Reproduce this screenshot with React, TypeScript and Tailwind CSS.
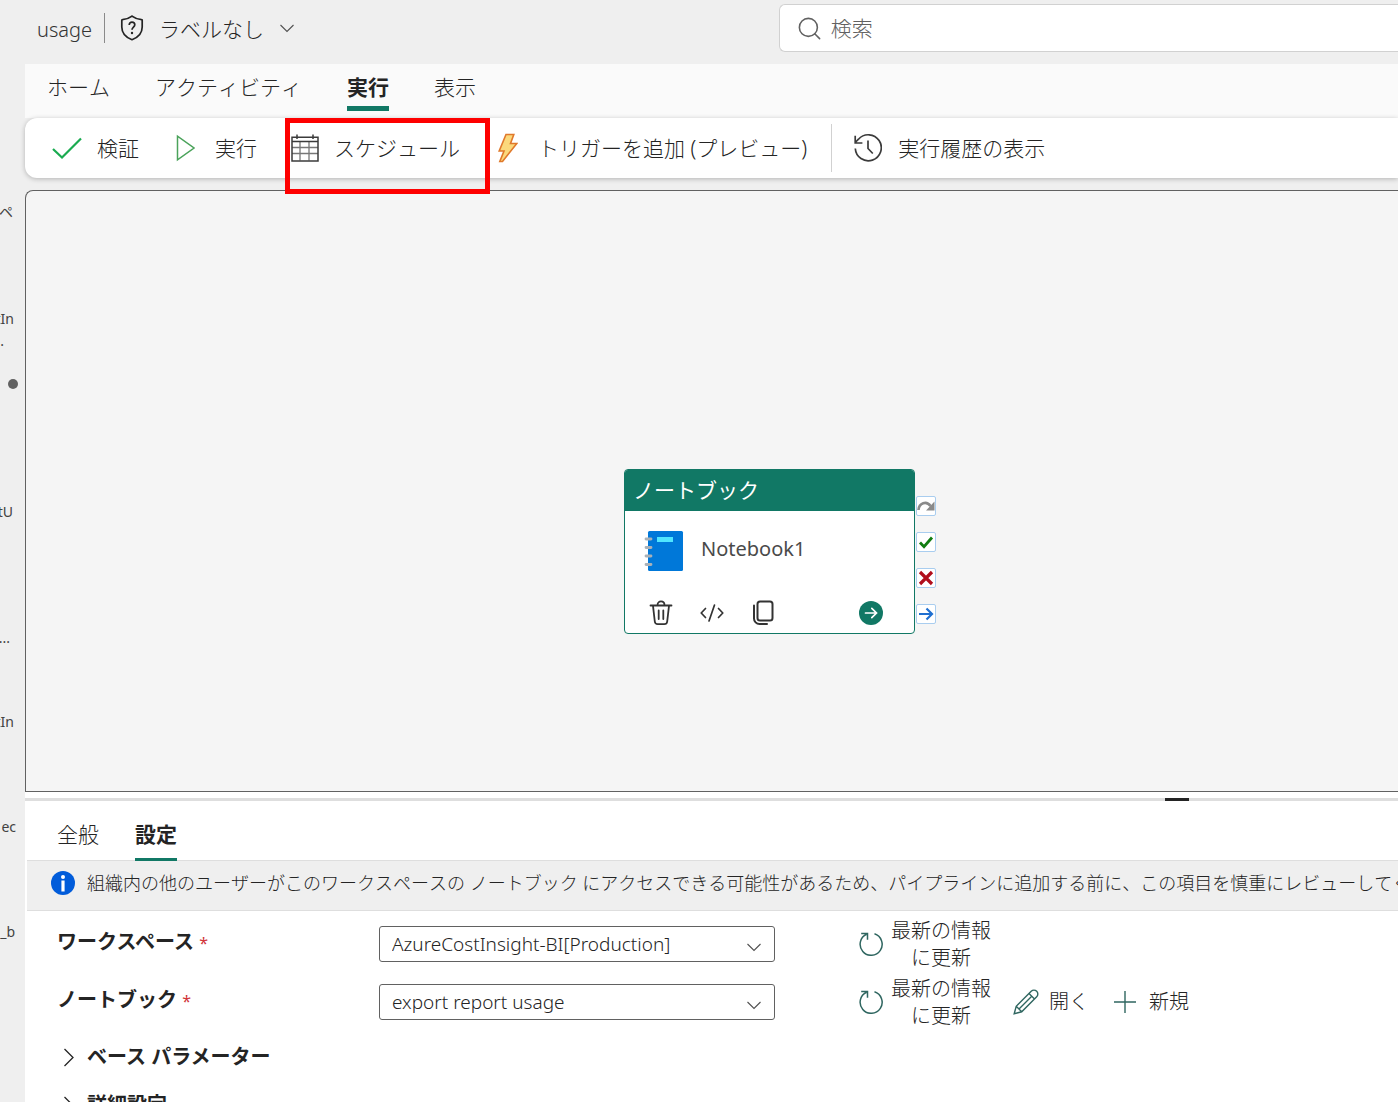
import type { ReactNode } from "react";
import { Search } from "lucide-react";

const RIBBON_TABS = ["ホーム", "アクティビティ", "実行", "表示"];
const PANEL_TABS = ["全般", "設定"];

function ChevronDown({ className = "" }: { className?: string }) {
  return (
    <svg width="16" height="10" viewBox="0 0 16 10" fill="none" stroke="#505050" strokeWidth="1.1" className={className} aria-hidden="true">
      <path d="M1.500 2L8 8.500 14.500 2" />
    </svg>
  );
}

function ChevronRight() {
  return (
    <svg width="12" height="20" viewBox="0 0 12 20" fill="none" stroke="#242424" strokeWidth="1.3" aria-hidden="true">
      <path d="M1.500 2L10 10.500 1.500 19" />
    </svg>
  );
}

function ShieldIcon() {
  return (
    <svg width="24" height="26" viewBox="0 0 24 26" fill="none" stroke="#242424" strokeWidth="1.7" aria-hidden="true">
      <path d="M12 1.2c2.8 2.2 6 3.2 9.6 3.5a.6.6 0 0 1 .6.6V12c0 6-3.700 10.300-10.200 12.700C5.500 22.300 1.800 18 1.800 12V5.300a.6.6 0 0 1 .6-.6C6 4.400 9.200 3.400 12 1.200Z" />
      <path d="M9.200 9.900c0-1.700 1.200-2.800 2.800-2.800s2.800 1.100 2.800 2.700c0 2.200-2.800 2.500-2.800 5" />
      <circle cx="12" cy="18" r="1.200" fill="#242424" stroke="none" />
    </svg>
  );
}

function CheckIcon() {
  return (
    <svg width="30" height="28" viewBox="0 0 30 28" fill="none" stroke="#1aab50" strokeWidth="2.200" aria-hidden="true">
      <path d="M1 15l9 8.500L29 4.500" />
    </svg>
  );
}

function PlayIcon() {
  return (
    <svg width="20" height="28" viewBox="0 0 20 28" fill="none" stroke="#4ba35b" strokeWidth="1.500" aria-hidden="true">
      <path d="M2.500 2.200v23.600L19 14Z" />
    </svg>
  );
}

function CalendarIcon() {
  return (
    <svg width="28" height="28" viewBox="0 0 28 28" fill="none" aria-hidden="true">
      <path d="M1 13.500h26M1 19.500h26M9 7.500v19M18 7.500v19" stroke="#777" strokeWidth="1.300" />
      <path d="M1 3.200h26v23.800H1ZM1 7.500h26M6 .5v4.500M22 .5v4.500" stroke="#3b3b3b" strokeWidth="1.500" />
    </svg>
  );
}

function BoltIcon() {
  return (
    <svg width="20" height="30" viewBox="0 0 20 30" aria-hidden="true">
      <path d="M8 1.500h7.800L12.500 10.500h6.300L4.500 28.500H1.800L6 18H1.200Z" fill="#fbd97c" stroke="#e0792b" strokeWidth="1.600" />
    </svg>
  );
}

function HistoryIcon() {
  return (
    <svg width="28" height="30" viewBox="0 0 28 30" fill="none" stroke="#3b3b3b" strokeWidth="1.700" aria-hidden="true">
      <path d="M1.300 15.500A13 13 0 1 0 4.500 6.200L1.200 9.500M1.200 2.800v7.200h7.200M14 7.500v8l4.800 5" />
    </svg>
  );
}

function RefreshIcon() {
  return (
    <svg width="24" height="24" viewBox="0 0 24 24" fill="none" stroke="#2f6660" strokeWidth="1.500" aria-hidden="true">
      <path d="M15.500 1.800A11 11 0 1 1 7.500 2.300M2.200 1.500h6.300v6.300" />
    </svg>
  );
}

function PencilIcon() {
  return (
    <svg width="26" height="26" viewBox="0 0 26 26" fill="none" stroke="#2f6660" strokeWidth="1.400" aria-hidden="true">
      <path d="M1.200 24.800l2-7.500L18.200 2.300a3.700 3.700 0 0 1 5.500 5.500L8.700 22.800ZM16 4.500l5.500 5.500M19 7L6 20M3.200 17.300l5.500 5.500" />
    </svg>
  );
}

function PlusIcon() {
  return (
    <svg width="24" height="24" viewBox="0 0 24 24" stroke="#2f6660" strokeWidth="1.400" aria-hidden="true">
      <path d="M12 1v22M1 12h22" />
    </svg>
  );
}

function NotebookIcon() {
  return (
    <svg width="40" height="42" viewBox="0 0 40 42" aria-hidden="true">
      <rect x="4" y="1" width="35" height="40" rx="1.500" fill="#0078d9" />
      <rect x="13" y="7" width="16" height="5" fill="#50e6ff" />
      <path d="M2 9h5M2 17.500h5M2 26h5M2 34.500h5" stroke="#a9b1b8" strokeWidth="2.800" strokeLinecap="round" />
    </svg>
  );
}

function TrashIcon() {
  return (
    <svg width="24" height="26" viewBox="0 0 24 26" fill="none" stroke="#333" strokeWidth="1.800" strokeLinecap="round" aria-hidden="true">
      <path d="M1.500 5.500h21M8.500 5.200c0-5 7-5 7 0M4 5.800l1.800 15.700a3 3 0 0 0 3 2.700h6.400a3 3 0 0 0 3-2.700L20 5.800M9.700 10.500v8.500M14.300 10.500v8.500" />
    </svg>
  );
}

function CodeIcon() {
  return (
    <svg width="24" height="20" viewBox="0 0 24 20" fill="none" stroke="#333" strokeWidth="1.700" strokeLinecap="round" strokeLinejoin="round" aria-hidden="true">
      <path d="M5.500 5.500L1.200 10l4.300 4.500M18.500 5.500l4.300 4.500-4.300 4.500M14.500 2l-5.500 16" />
    </svg>
  );
}

function CopyIcon() {
  return (
    <svg width="22" height="26" viewBox="0 0 22 26" fill="none" stroke="#333" strokeWidth="2" strokeLinecap="round" aria-hidden="true">
      <rect x="5.500" y="1.500" width="15" height="19" rx="2.500" />
      <path d="M2 5.500v13a5.500 5.500 0 0 0 5.500 5.500H15" />
    </svg>
  );
}

function ToolbarButton({ icon, label, className = "", children }: { icon: ReactNode; label: string; className?: string; children?: ReactNode }) {
  return (
    <button className={`relative flex h-full shrink-0 items-center whitespace-nowrap ${className}`}>
      {icon}
      <span>{label}</span>
      {children}
    </button>
  );
}

function Header() {
  return (
    <header className="flex h-16 shrink-0 items-start">
      <div className="flex h-14 w-5/9 items-center pl-[37px]">
        <span className="pt-1 text-xl text-[#333]">usage</span>
        <span className="ml-3 h-[30px] w-px bg-[#8a8a8a]" />
        <button className="ml-[15px] flex items-center whitespace-nowrap">
          <ShieldIcon />
          <span className="mx-[15px] pt-0.5">ラベルなし</span>
          <ChevronDown />
        </button>
      </div>
      <label className="mt-1 ml-0.5 flex h-12 flex-1 items-center gap-2 rounded-l-md border border-r-0 border-[#d1d1d1] bg-white pl-4 text-[#616161]">
        <Search size={27} strokeWidth={1.4} className="shrink-0" />
        <input type="search" aria-label="検索" placeholder="検索" className="w-full bg-transparent outline-none placeholder:text-[#616161]" />
      </label>
    </header>
  );
}

function Sidebar() {
  return (
    <nav className="flex w-[25px] shrink-0 flex-col items-end overflow-hidden pt-[138px] text-sm font-normal text-[#424242]">
      <a href="#workspace" className="h-[106px] pr-3">ペ</a>
      <a href="#insight" className="h-[71px] pr-[11px] text-right leading-[22px]">
        tIn
        <br />
        <span className="pr-2.5">.</span>
      </a>
      <span className="mr-[7px] h-2.5 w-2.5 shrink-0 rounded-full bg-[#616161]" />
      <a href="#usage" className="mt-[113px] h-[126px] pr-3">tU</a>
      <a href="#more" className="h-[84px] pr-[15px]">...</a>
      <a href="#cost" className="h-[105px] pr-[11px]">tIn</a>
      <a href="#spec" className="h-[105px] pr-[9px]">ec</a>
      <a href="#bi" className="pr-2.5">_b</a>
    </nav>
  );
}

function Ribbon() {
  return (
    <div className="shrink-0 pb-3">
      <div className="bg-[#fafafa]">
        <div role="tablist" className="flex h-[54px] gap-[45px] pl-[22px]">
          {RIBBON_TABS.map((tab) => (
            <button
              key={tab}
              role="tab"
              aria-selected={tab === "実行"}
              className={`mb-[7px] border-b-[5px] pt-1 whitespace-nowrap ${
                tab === "実行" ? "border-[#117865] font-bold" : "border-transparent"
              }`}
            >
              {tab}
            </button>
          ))}
        </div>
      </div>
      <div className="flex h-[60px] items-center rounded-l-xl bg-white pl-[27px] shadow-[0_1px_5px_rgba(0,0,0,0.25)]">
        <ToolbarButton icon={<CheckIcon />} label="検証" className="gap-[15px]" />
        <ToolbarButton icon={<PlayIcon />} label="実行" className="ml-9 gap-5" />
        <ToolbarButton icon={<CalendarIcon />} label="スケジュール" className="ml-[34px] gap-[15px]">
          <span className="absolute top-0 -right-[30px] -bottom-4 -left-1.5 z-10 border-[5px] border-[#fe0000]" />
        </ToolbarButton>
        <ToolbarButton icon={<BoltIcon />} label="トリガーを追加 (プレビュー)" className="ml-[38px] gap-5" />
        <span className="ml-6 h-12 w-px shrink-0 bg-[#d1d1d1]" />
        <ToolbarButton icon={<HistoryIcon />} label="実行履歴の表示" className="ml-[22px] gap-4" />
      </div>
    </div>
  );
}

function Port({ label, children }: { label: string; children: ReactNode }) {
  return (
    <button aria-label={label} className="h-5 w-5 rounded-xs border border-[#a9cdef] bg-white">
      <svg viewBox="0 0 18 18" fill="none" aria-hidden="true">
        {children}
      </svg>
    </button>
  );
}

function NotebookNode() {
  return (
    <div className="absolute top-[278px] left-[598px] flex items-start">
      <div className="w-[291px] overflow-hidden rounded border border-[#117865] bg-white">
        <div className="flex h-[41px] items-center bg-[#117865] pb-0.5 pl-2 font-normal text-white">ノートブック</div>
        <div className="flex h-20 items-center gap-[17px] pl-[19px] text-xl font-normal text-[#4a4a4a]">
          <NotebookIcon />
          <span className="pb-1">Notebook1</span>
        </div>
        <div className="flex h-[42px] items-center pt-0.5 pr-[31px] pl-6">
          <button aria-label="削除"><TrashIcon /></button>
          <button aria-label="コード" className="ml-[27px]"><CodeIcon /></button>
          <button aria-label="複製" className="ml-7"><CopyIcon /></button>
          <button aria-label="実行" className="ml-auto">
            <svg width="24" height="24" viewBox="0 0 24 24" fill="none" aria-hidden="true">
              <circle cx="12" cy="12" r="12" fill="#117865" />
              <path d="M6.500 12h11M12.800 7.300l4.700 4.700-4.700 4.700" stroke="#fff" strokeWidth="1.700" strokeLinecap="round" />
            </svg>
          </button>
        </div>
      </div>
      <div className="mt-[27px] ml-px flex flex-col gap-4">
        <Port label="スキップ時">
          <path d="M1.500 13C2 6 9.500 3.500 13.500 9" stroke="#8a8a8a" strokeWidth="2.600" />
          <path d="M17.500 4.500v9H9Z" fill="#8a8a8a" />
        </Port>
        <Port label="成功時">
          <path d="M3 9.500l4 4.200L15 4.500" stroke="#107c10" strokeWidth="2.800" />
        </Port>
        <Port label="失敗時">
          <path d="M3 3l12 12M15 3L3 15" stroke="#b10e1c" strokeWidth="3.200" />
        </Port>
        <Port label="完了時">
          <path d="M2 9h13M9.500 3.500L15 9l-5.500 5.500" stroke="#1f6fd0" strokeWidth="2.200" />
        </Port>
      </div>
    </div>
  );
}

function SelectField({ id, label, value, children }: { id: string; label: string; value: string; children?: ReactNode }) {
  return (
    <div className="flex h-[54px] items-center">
      <label htmlFor={id} className="w-[322px] shrink-0 pb-1 font-bold">
        {label} <span className="text-base font-normal text-[#d13438]">*</span>
      </label>
      <div className="relative w-[396px] shrink-0">
        <select id={id} className="block h-9 w-full appearance-none rounded-[3px] border border-[#616161] bg-white px-3 text-[19px]">
          <option>{value}</option>
        </select>
        <ChevronDown className="pointer-events-none absolute top-4 right-[13px]" />
      </div>
      <button type="button" className="ml-[84px] flex shrink-0 items-center gap-2 leading-[27px]">
        <RefreshIcon />
        <span>
          最新の情報
          <br />
          に更新
        </span>
      </button>
      {children}
    </div>
  );
}

function SettingsPanel() {
  return (
    <section className="flex flex-1 flex-col bg-white">
      <div className="mt-1.5 h-[3px] shrink-0 bg-[#dedede] pl-[83%]">
        <div className="h-full w-6 bg-[#242424]" />
      </div>
      <div role="tablist" className="ml-0.5 flex h-[60px] shrink-0 gap-9 border-b border-[#dedede] pl-[30px]">
        {PANEL_TABS.map((tab) => (
          <button
            key={tab}
            role="tab"
            aria-selected={tab === "設定"}
            className={`-mb-px border-b-[3px] pt-2 ${tab === "設定" ? "border-[#117865] font-bold" : "border-transparent"}`}
          >
            {tab}
          </button>
        ))}
      </div>
      <div className="ml-0.5 flex h-[50px] shrink-0 items-center gap-3 overflow-hidden border-b border-[#dedede] bg-[#efefef] pb-1.5 pl-6 text-lg whitespace-nowrap">
        <svg width="24" height="24" viewBox="0 0 24 24" className="shrink-0" aria-hidden="true">
          <circle cx="12" cy="12" r="12" fill="#015cda" />
          <circle cx="12" cy="6" r="2" fill="#fff" />
          <path d="M12 9.500v11" stroke="#fff" strokeWidth="3.200" />
        </svg>
        組織内の他のユーザーがこのワークスペースの ノートブック にアクセスできる可能性があるため、パイプラインに追加する前に、この項目を慎重にレビューしてください。
      </div>
      <form className="flex flex-col gap-1 pt-1.5 pl-8 text-xl [font-kerning:normal]">
        <SelectField id="workspace" label="ワークスペース" value="AzureCostInsight-BI[Production]" />
        <SelectField id="notebook" label="ノートブック" value="export report usage">
          <button type="button" className="ml-[22px] flex shrink-0 items-center gap-2.5">
            <PencilIcon />
            開く
          </button>
          <button type="button" className="ml-6 flex shrink-0 items-center gap-3">
            <PlusIcon />
            新規
          </button>
        </SelectField>
        <div className="flex flex-col pl-1.5">
          {["ベース パラメーター", "詳細設定"].map((section) => (
            <button key={section} type="button" className="flex h-12 items-center gap-3 font-bold">
              <ChevronRight />
              {section}
            </button>
          ))}
        </div>
      </form>
    </section>
  );
}

export default function App() {
  return (
    <div className="flex h-screen flex-col overflow-hidden bg-[#efefef] font-['Noto_Sans','Noto_Sans_CJK_JP',sans-serif] text-[21px] leading-7 font-light text-[#242424] [font-kerning:none]">
      <Header />
      <div className="flex min-h-0 flex-1">
        <Sidebar />
        <main className="flex min-w-0 flex-1 flex-col">
          <Ribbon />
          <div className="relative h-[602px] shrink-0 rounded-tl-lg border border-r-0 border-[#616161] bg-[#f5f5f5]">
            <NotebookNode />
          </div>
          <SettingsPanel />
        </main>
      </div>
    </div>
  );
}
